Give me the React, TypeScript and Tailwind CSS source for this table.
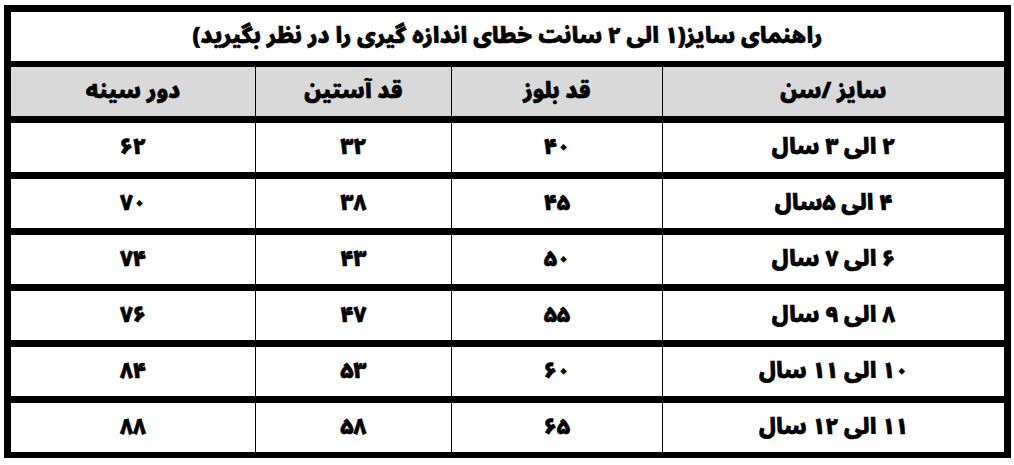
const rows = [
  ["۲ الی ۳ سال", "۴۰", "۳۲", "۶۲"],
  ["۴ الی ۵سال", "۴۵", "۳۸", "۷۰"],
  ["۶ الی ۷ سال", "۵۰", "۴۳", "۷۴"],
  ["۸ الی ۹ سال", "۵۵", "۴۷", "۷۶"],
  ["۱۰ الی ۱۱ سال", "۶۰", "۵۳", "۸۴"],
  ["۱۱ الی ۱۲ سال", "۶۵", "۵۸", "۸۸"],
];

const headers = ["سایز /سن", "قد بلوز", "قد آستین", "دور سینه"];

const Row = ({ cells, gray }: { cells: string[]; gray?: boolean }) => {
  return (
    <div className="grid grid-cols-[341px_210px_195px_244px] gap-x-px h-[49px]">
      {cells.map((c, i) => (
        <div
          key={i}
          className={`flex items-center justify-center text-[22px] font-black text-black [-webkit-text-stroke:0.6px_black] ${gray ? "bg-[#d9d9d9]" : "bg-white"}`}
        >
          {c}
        </div>
      ))}
    </div>
  );
};

export default function App() {
  return (
    <div
      className="w-[1014px] h-[465px] bg-white pt-[5px] pl-[4px]"
      style={{ fontFamily: '"Noto Sans Arabic", "Noto Naskh Arabic", "DejaVu Sans", sans-serif' }}
    >
      <div dir="rtl" className="w-[1007px] bg-black border-x-[7px] border-t-[7px] border-b-[6px] border-black flex flex-col">
        <div className="h-[49px] bg-white flex items-center justify-center text-[22px] font-black text-black [-webkit-text-stroke:0.6px_black] mb-[6px]">
          راهنمای سایز(۱ الی ۲ سانت خطای اندازه گیری را در نظر بگیرید)
        </div>
        <div className="flex flex-col gap-y-[7px]">
          <Row cells={headers} gray />
          {rows.map((r, i) => (
            <Row key={i} cells={r} />
          ))}
        </div>
      </div>
    </div>
  );
}
